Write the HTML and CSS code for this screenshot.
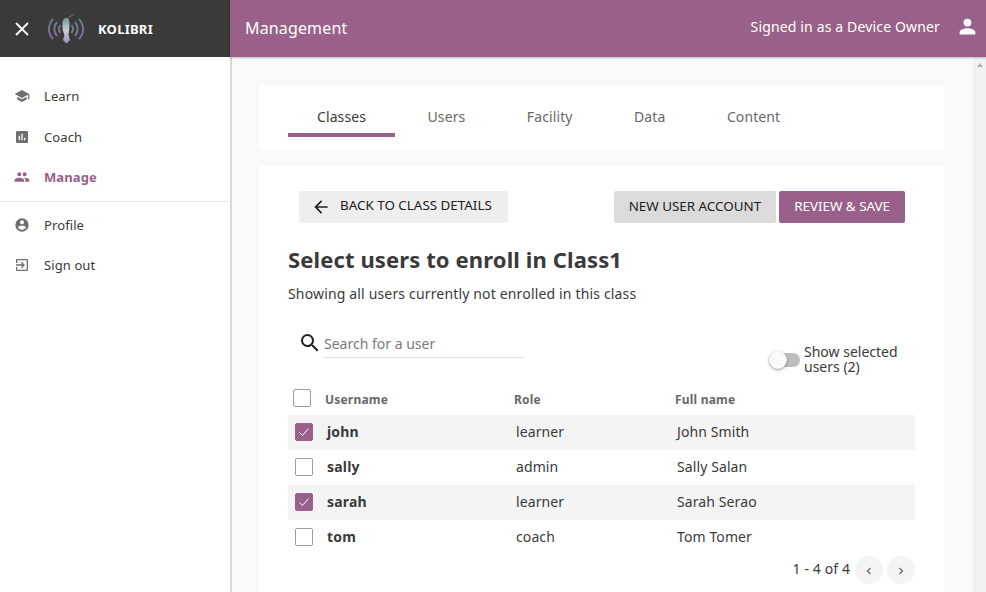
FILE: index.html
```html
<!DOCTYPE html>
<html lang="en">
<head>
    <meta charset="UTF-8">
    <meta name="viewport" content="width=device-width, initial-scale=1.0">
    <title>Management - Kolibri</title>
    <link rel="stylesheet" href="styles.css">
</head>
<body>
    <aside class="sidebar">
        <div class="side-head">
            <svg class="close-icon" viewBox="0 0 14 14" width="14" height="14"><path d="M1 1l12 12M13 1L1 13" stroke="#fff" stroke-width="1.8" fill="none"/></svg>
            <svg class="logo" viewBox="0 0 36 30" width="36" height="30">
                <defs>
                    <linearGradient id="arcs" x1="0" y1="0" x2="0" y2="1">
                        <stop offset="0" stop-color="#5c8288"/>
                        <stop offset="1" stop-color="#8a6a9c"/>
                    </linearGradient>
                    <linearGradient id="bird" x1="0" y1="0" x2="0" y2="1">
                        <stop offset="0" stop-color="#6f9a98"/>
                        <stop offset=".5" stop-color="#c4d0d2"/>
                        <stop offset="1" stop-color="#a58cb4"/>
                    </linearGradient>
                </defs>
                <g fill="none" stroke="url(#arcs)" stroke-width="2">
                    <path d="M5 5C-.5 11-.5 19 5 25"/>
                    <path d="M9 8C5.500 12 5.500 18 9 22"/>
                    <path d="M12.500 11C10.500 13.500 10.500 16.500 12.500 19"/>
                    <path d="M31 5C36.500 11 36.500 19 31 25"/>
                    <path d="M27 8C30.500 12 30.500 18 27 22"/>
                    <path d="M23.500 11C25.500 13.500 25.500 16.500 23.500 19"/>
                </g>
                <path d="M18 4c2.500 0 3.500 2 3.500 5 0 5-.5 9-1 12l1.500 5-3.500 3.500L15 26l1.500-5c-1.500-3-2.500-7-2-12 .2-3 1.500-5 3.500-5z" fill="url(#bird)"/>
                <path d="M19 5l7-5" stroke="#8f8a70" stroke-width=".8"/>
            </svg>
            <span class="brand">KOLIBRI</span>
        </div>
        <nav class="side-nav">
            <ul class="nav-group">
                <li class="nav-item">
                    <svg viewBox="0 0 24 24" width="16" height="16"><path d="M5 13.200v4L12 21l7-3.800v-4L12 17l-7-3.800zM12 3L1 9l11 6 9-4.900V17h2V9L12 3z"/></svg>
                    Learn
                </li>
                <li class="nav-item">
                    <svg viewBox="0 0 24 24" width="16" height="16"><path d="M19 3H5a2 2 0 0 0-2 2v14a2 2 0 0 0 2 2h14a2 2 0 0 0 2-2V5a2 2 0 0 0-2-2zM9 17H7v-7h2v7zm4 0h-2V7h2v10zm4 0h-2v-4h2v4z"/></svg>
                    Coach
                </li>
                <li class="nav-item active">
                    <svg viewBox="0 0 24 24" width="16" height="16"><path d="M16 11c1.700 0 3-1.300 3-3s-1.300-3-3-3-3 1.300-3 3 1.300 3 3 3zm-8 0c1.700 0 3-1.300 3-3S9.700 5 8 5 5 6.300 5 8s1.300 3 3 3zm0 2c-2.300 0-7 1.200-7 3.500V19h14v-2.500C15 14.200 10.300 13 8 13zm8 0h-1c1.200.8 2 2 2 3.500V19h6v-2.500c0-2.300-4.700-3.500-7-3.500z"/></svg>
                    Manage
                </li>
            </ul>
            <ul class="nav-group second">
                <li class="nav-item">
                    <svg viewBox="0 0 24 24" width="16" height="16"><path d="M12 2a10 10 0 1 0 0 20 10 10 0 0 0 0-20zm0 3a3 3 0 1 1 0 6 3 3 0 0 1 0-6zm0 14.200a7.200 7.200 0 0 1-6-3.200c0-2 4-3.100 6-3.100s6 1.100 6 3.100a7.200 7.200 0 0 1-6 3.200z"/></svg>
                    Profile
                </li>
                <li class="nav-item">
                    <svg viewBox="0 0 24 24" width="16" height="16"><path d="M10.100 15.600l1.400 1.400 5-5-5-5-1.400 1.400 2.600 2.600H3v2h9.700l-2.600 2.600zM19 3H5a2 2 0 0 0-2 2v4h2V5h14v14H5v-4H3v4a2 2 0 0 0 2 2h14a2 2 0 0 0 2-2V5a2 2 0 0 0-2-2z"/></svg>
                    Sign out
                </li>
            </ul>
        </nav>
    </aside>

    <div class="page">
        <header class="topbar">
            <span class="page-title">Management</span>
            <span class="signed-in">Signed in as a Device Owner</span>
            <svg class="user-icon" viewBox="0 0 24 24" width="21" height="21"><path d="M12 12a4.500 4.500 0 1 0 0-9 4.500 4.500 0 0 0 0 9zm0 2c-3 0-9 1.500-9 4.500V21h18v-2.500c0-3-6-4.500-9-4.500z" fill="#fff"/></svg>
        </header>

        <div class="body-row">
            <main class="content">
                <div class="card tabs">
                    <a class="tab current">Classes</a>
                    <a class="tab">Users</a>
                    <a class="tab">Facility</a>
                    <a class="tab">Data</a>
                    <a class="tab">Content</a>
                </div>

                <section class="card panel">
                    <div class="actions">
                        <button class="btn back">
                            <svg viewBox="0 0 24 24" width="20" height="20"><path d="M20 11H7.800l5.600-5.600L12 4l-8 8 8 8 1.400-1.400L7.800 13H20v-2z" fill="#212121"/></svg>
                            BACK TO CLASS DETAILS
                        </button>
                        <div class="action-right">
                            <button class="btn secondary">NEW USER ACCOUNT</button>
                            <button class="btn primary">REVIEW &amp; SAVE</button>
                        </div>
                    </div>

                    <h1>Select users to enroll in Class1</h1>
                    <p class="subtitle">Showing all users currently not enrolled in this class</p>

                    <div class="filters">
                        <div class="search">
                            <svg viewBox="0 0 24 24" width="24" height="24"><path d="M15.500 14h-.79l-.28-.27A6.470 6.470 0 0 0 16 9.500 6.500 6.500 0 1 0 9.500 16c1.610 0 3.090-.59 4.230-1.570l.27.28v.79l5 4.990L20.490 19l-4.990-5zm-6 0C7.010 14 5 11.990 5 9.500S7.010 5 9.500 5 14 7.010 14 9.500 11.990 14 9.500 14z" fill="#212121"/></svg>
                            <span class="search-box">Search for a user</span>
                        </div>
                        <div class="toggle-wrap">
                            <span class="toggle"><span class="knob"></span></span>
                            <span class="toggle-label">Show selected users (2)</span>
                        </div>
                    </div>

                    <div class="row head">
                        <span class="box"></span>
                        <span class="col-name">Username</span>
                        <span class="col-role">Role</span>
                        <span>Full name</span>
                    </div>
                    <div class="row striped">
                        <span class="box checked"><svg viewBox="0 0 18 18" width="18" height="18"><path d="M4.500 9.500l3 3 6-7" stroke="#fff" stroke-width="1" fill="none"/></svg></span>
                        <b class="col-name">john</b>
                        <span class="col-role">learner</span>
                        <span>John Smith</span>
                    </div>
                    <div class="row">
                        <span class="box"></span>
                        <b class="col-name">sally</b>
                        <span class="col-role">admin</span>
                        <span>Sally Salan</span>
                    </div>
                    <div class="row striped">
                        <span class="box checked"><svg viewBox="0 0 18 18" width="18" height="18"><path d="M4.500 9.500l3 3 6-7" stroke="#fff" stroke-width="1" fill="none"/></svg></span>
                        <b class="col-name">sarah</b>
                        <span class="col-role">learner</span>
                        <span>Sarah Serao</span>
                    </div>
                    <div class="row">
                        <span class="box"></span>
                        <b class="col-name">tom</b>
                        <span class="col-role">coach</span>
                        <span>Tom Tomer</span>
                    </div>

                    <div class="pager">
                        <span class="pager-text">1 - 4 of 4</span>
                        <span class="circle"><svg viewBox="0 0 10 10" width="10" height="10"><path d="M6.500 2L3.500 5l3 3" stroke="#666" stroke-width="1.200" fill="none"/></svg></span>
                        <span class="circle"><svg viewBox="0 0 10 10" width="10" height="10"><path d="M3.500 2l3 3-3 3" stroke="#666" stroke-width="1.200" fill="none"/></svg></span>
                    </div>
                </section>
            </main>
            <div class="scrollbar"><span class="scroll-up"></span></div>
        </div>
    </div>
</body>
</html>
```
FILE: styles.css
```css
body {
    font-family: "Noto Sans", sans-serif;
    font-size: 14px;
    color: #3a3a3a;
    margin: 0;
    padding: 0;
    display: flex;
    height: 592px;
    overflow: hidden;
    background-color: #f9f9f9;
}

/* sidebar */
.sidebar {
    width: 232px;
    flex-shrink: 0;
    display: flex;
    flex-direction: column;
}
.side-head {
    height: 57px;
    flex-shrink: 0;
    margin-right: 2px;
    background-color: #3a3a3a;
    display: flex;
    align-items: center;
    box-shadow: 0 1px 2px rgba(0, 0, 0, 0.25);
    padding-left: 15px;
}
.logo {
    margin-left: 19px;
}
.brand {
    color: #fff;
    font-weight: 700;
    font-size: 13px;
    letter-spacing: 0.25px;
    margin-left: 14px;
}
.side-nav {
    flex: 1;
    background-color: #fff;
    border-right: 2px solid #d8d8d8;
    padding-top: 19px;
}
.nav-group {
    list-style-type: none;
    margin: 0;
    padding: 0 0 3px;
}
.nav-group.second {
    border-top: 1px solid #e8e8e8;
    padding-top: 3px;
}
.nav-item {
    height: 40.500px;
    display: flex;
    align-items: center;
    padding-left: 14px;
    font-size: 13px;
    letter-spacing: 0.1px;
}
.nav-item svg {
    fill: #6e6e6e;
    margin-right: 14px;
}
.nav-item.active {
    color: #996189;
    font-weight: 700;
}
.nav-item.active svg {
    fill: #996189;
}

/* top bar */
.page {
    flex: 1;
    min-width: 0;
    display: flex;
    flex-direction: column;
}
.topbar {
    height: 57px;
    box-sizing: border-box;
    flex-shrink: 0;
    margin-left: -2px;
    background-color: #996189;
    color: #fff;
    display: flex;
    align-items: center;
    padding: 0 8px 2px 15px;
    box-shadow: 0 1px 2px rgba(0, 0, 0, 0.25);
    position: relative;
}
.page-title {
    font-size: 16px;
    letter-spacing: 0.15px;
    flex: 1;
}
.signed-in {
    font-size: 14px;
    letter-spacing: 0.15px;
    margin-bottom: 3px;
    margin-right: 17px;
}
.user-icon {
    margin-bottom: 3px;
}

/* content */
.body-row {
    flex: 1;
    display: flex;
    min-height: 0;
}
.content {
    flex: 1;
    padding: 28px 29px 0 27px;
    overflow: hidden;
}
.scrollbar {
    width: 13px;
    background-color: #f1f1f1;
    flex-shrink: 0;
    display: flex;
    justify-content: center;
    padding-top: 6px;
    box-sizing: border-box;
}
.scroll-up {
    width: 0;
    height: 0;
    border-left: 3.500px solid transparent;
    border-right: 3.500px solid transparent;
    border-bottom: 4px solid #b0b0b0;
}
.card {
    background-color: #fff;
    border-radius: 2px;
}
.tabs {
    height: 66px;
    box-sizing: border-box;
    padding: 15px 0 0 29px;
    display: flex;
    margin-bottom: 15px;
}
.tab {
    height: 37px;
    line-height: 34px;
    padding: 0 29px;
    color: #686868;
    letter-spacing: 0.1px;
    box-sizing: border-box;
    margin-right: 3.500px;
}
.tab.current {
    color: #3a3a3a;
    border-bottom: 4px solid #996189;
}
.panel {
    padding: 25px 29px 0;
    height: 500px;
}

/* buttons */
.actions {
    display: flex;
    justify-content: space-between;
    padding: 0 10px 0 11px;
}
.action-right {
    display: flex;
    gap: 3px;
}
.btn {
    font-family: inherit;
    font-size: 13.400px;
    height: 32px;
    border: none;
    border-radius: 2px;
    padding: 0 15px 2px;
    color: #212121;
    background-color: #dbdbdb;
}
.btn.back {
    background-color: #eeeeee;
    display: flex;
    align-items: center;
    gap: 9px;
    padding: 0 16px 3px 12px;
    line-height: 1;
}
.btn.back svg {
    margin-top: 3px;
}
.btn.primary {
    background-color: #996189;
    color: #fff;
}

h1 {
    font-size: 22px;
    letter-spacing: 0.12px;
    font-weight: 700;
    margin: 20px 0 0;
    line-height: 32px;
}
.subtitle {
    margin: 9px 0 0;
    line-height: 20px;
    font-size: 14px;
    letter-spacing: 0.16px;
}

/* filters */
.filters {
    display: flex;
    justify-content: space-between;
    align-items: flex-start;
    margin-top: 21px;
    height: 61px;
}
.search {
    display: flex;
    align-items: flex-start;
    padding-left: 10px;
}
.search svg {
    margin-top: 6px;
    margin-right: 1px;
}
.search-box {
    width: 199px;
    height: 31px;
    line-height: 35px;
    border-bottom: 1px solid #dedede;
    color: #7a7a7a;
    margin-left: 1px;
    margin-top: 1px;
}
.toggle-wrap {
    display: flex;
    align-items: center;
    margin-top: 19px;
    width: 146px;
}
.toggle {
    width: 31px;
    height: 14px;
    border-radius: 7px;
    background-color: #bdbdbd;
    position: relative;
    flex-shrink: 0;
    margin-right: 4px;
    margin-top: 2px;
}
.knob {
    position: absolute;
    left: 0;
    top: -2px;
    width: 18px;
    height: 18px;
    border-radius: 50%;
    background-color: #fafafa;
    box-shadow: 0 1px 3px rgba(0, 0, 0, 0.4);
}
.toggle-label {
    line-height: 15px;
    width: 110px;
}

/* table */
.row {
    display: flex;
    align-items: center;
    height: 35px;
    box-sizing: border-box;
    padding: 0 0 2px 7px;
    letter-spacing: 0.1px;
}
.row.striped {
    background-color: #f4f4f4;
}
.row b {
    font-weight: 700;
    letter-spacing: 0.2px;
}
.row.head {
    height: 32px;
    margin-top: -3px;
    padding: 0 0 0 5px;
    font-size: 12px;
    font-weight: 700;
    letter-spacing: 0.2px;
    color: #686868;
}
.box {
    width: 16px;
    height: 16px;
    border: 1px solid #9e9e9e;
    border-radius: 2px;
    flex-shrink: 0;
    background-color: #fff;
}
.head .box {
    margin-bottom: 2px;
}
.box.checked {
    background-color: #996189;
    border-color: #996189;
}
.box svg {
    display: block;
    margin: -1px;
}
.col-name {
    width: 189px;
    margin-left: 14px;
}
.col-role {
    width: 161px;
}

/* pager */
.pager {
    display: flex;
    align-items: center;
    justify-content: flex-end;
    gap: 4px;
    height: 29px;
    width: 627px;
}
.pager-text {
    margin: 0 1px 2px 0;
    letter-spacing: 0.1px;
}
.circle {
    width: 28px;
    height: 28px;
    border-radius: 50%;
    background-color: #f4f4f4;
    display: flex;
    align-items: center;
    justify-content: center;
    padding-top: 3px;
    box-sizing: border-box;
}
```
